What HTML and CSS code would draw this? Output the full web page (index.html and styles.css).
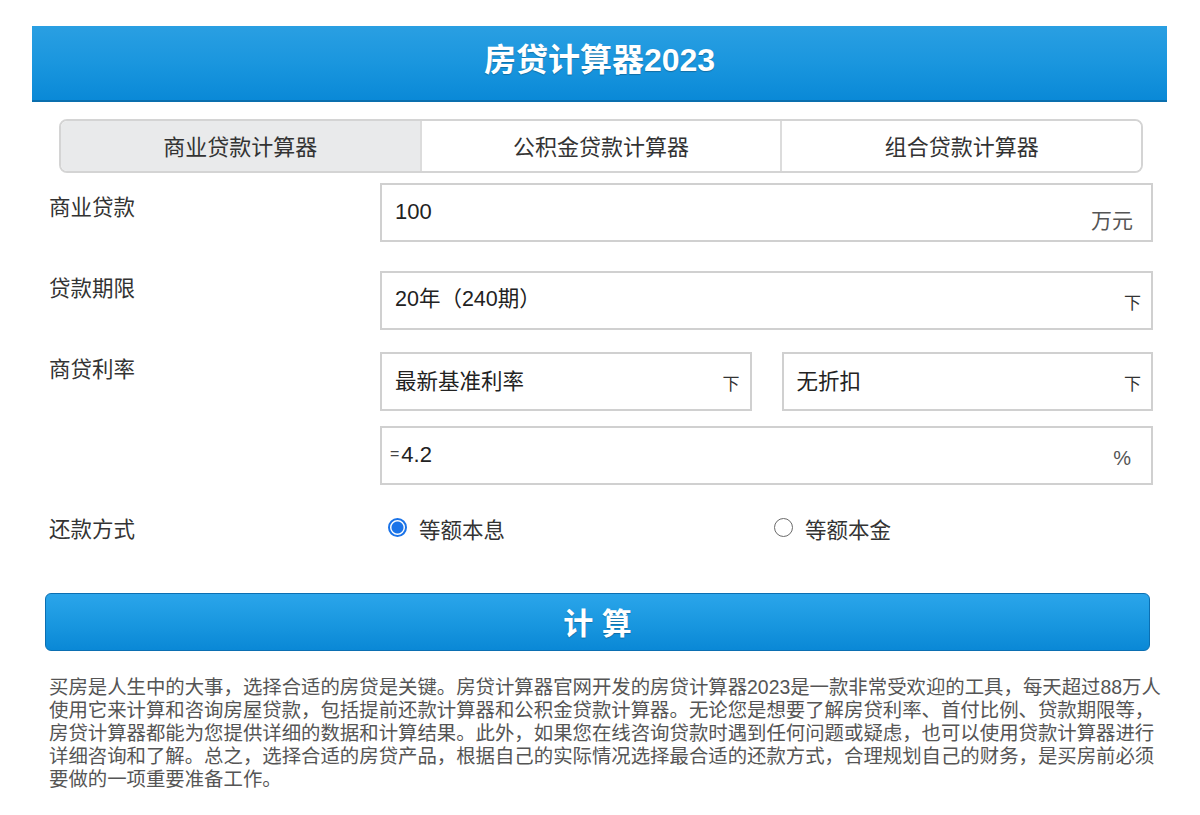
FILE: index.html
```html
<!DOCTYPE html>
<html lang="zh-CN">
<head>
<meta charset="utf-8">
<title>房贷计算器2023</title>
<link rel="stylesheet" href="styles.css">
</head>
<body>
<div class="page">
  <header class="topbar"><h1 class="title">房贷计算器2023</h1></header>

  <nav class="tabs">
    <a class="tab active">商业贷款计算器</a>
    <a class="tab">公积金贷款计算器</a>
    <a class="tab">组合贷款计算器</a>
  </nav>

  <form class="form">
    <div class="row row-amount">
      <label class="lbl">商业贷款</label>
      <div class="box">
        <span class="val">100</span>
        <span class="unit">万元</span>
      </div>
    </div>

    <div class="row row-term">
      <label class="lbl">贷款期限</label>
      <div class="box select">
        <span class="val">20年（240期）</span>
        <span class="arrow">下</span>
      </div>
    </div>

    <div class="row row-rate">
      <label class="lbl">商贷利率</label>
      <div class="rate-fields">
        <div class="pair">
          <div class="box select">
            <span class="val">最新基准利率</span>
            <span class="arrow">下</span>
          </div>
          <div class="box select">
            <span class="val">无折扣</span>
            <span class="arrow">下</span>
          </div>
        </div>
        <div class="box rate">
          <span class="val"><span class="eq">=</span>4.2</span>
          <span class="unit pct">%</span>
        </div>
      </div>
    </div>

    <div class="row row-method">
      <label class="lbl">还款方式</label>
      <div class="radios">
        <span class="radio-opt"><span class="radio checked"></span>等额本息</span>
        <span class="radio-opt"><span class="radio"></span>等额本金</span>
      </div>
    </div>
  </form>

  <button class="calc" type="button">计 算</button>

  <p class="intro">买房是人生中的大事，选择合适的房贷是关键。房贷计算器官网开发的房贷计算器2023是一款非常受欢迎的工具，每天超过88万人使用它来计算和咨询房屋贷款，包括提前还款计算器和公积金贷款计算器。无论您是想要了解房贷利率、首付比例、贷款期限等，房贷计算器都能为您提供详细的数据和计算结果。此外，如果您在线咨询贷款时遇到任何问题或疑虑，也可以使用贷款计算器进行详细咨询和了解。总之，选择合适的房贷产品，根据自己的实际情况选择最合适的还款方式，合理规划自己的财务，是买房前必须要做的一项重要准备工作。</p>
</div>
</body>
</html>
```

FILE: styles.css
```css
* { box-sizing: border-box; }

html, body {
  margin: 0;
  padding: 0;
  background: #ffffff;
}

body {
  font-family: "Liberation Sans", "Noto Sans CJK SC", sans-serif;
  color: #333;
}

.page {
  padding-top: 26px;
}

/* header */
.topbar {
  margin: 0 33px 0 32px;
  height: 76px;
  background: linear-gradient(to bottom, #2a9fe2 0%, #1a96de 50%, #0a89d7 100%);
  border-bottom: 2px solid #0a6fae;
  display: flex;
  align-items: center;
  justify-content: center;
}

.title {
  margin: 0 0 6px 0;
  font-size: 32px;
  font-weight: bold;
  color: #fff;
  line-height: 40px;
  text-shadow: 0 1px 1px rgba(0, 0, 0, 0.25);
}

/* tabs */
.tabs {
  margin: 17px 0 0 59px;
  width: 1084px;
  height: 54px;
  display: flex;
  border: 2px solid #d4d4d4;
  border-radius: 8px;
  overflow: hidden;
}

.tab {
  flex: 1;
  display: flex;
  align-items: center;
  justify-content: center;
  font-family: "Noto Sans CJK SC", sans-serif;
  font-size: 22px;
  color: #333;
  background: #fff;
  padding-bottom: 3px;
}

.tab + .tab {
  border-left: 2px solid #dcdcdc;
}

.tab.active {
  background: #e9eaeb;
}

/* form */
.form {
  margin: 10px 47px 0 49px;
}

.row {
  display: grid;
  grid-template-columns: 331px 1fr;
}

.lbl {
  font-family: "Noto Sans CJK SC", sans-serif;
  font-size: 21.5px;
  line-height: 30px;
  color: #333;
}

.row-amount { margin-bottom: 29px; }
.row-amount .lbl { padding-top: 8px; }

.row-term { margin-bottom: 22px; }
.row-term .lbl { padding-top: 1px; }

.row-rate .lbl { padding-top: 1px; }

.box {
  height: 59px;
  border: 2px solid #d0d0d0;
  background: #fff;
  display: flex;
  align-items: center;
  justify-content: space-between;
  padding: 0 18px 0 13px;
}

.val {
  font-size: 22px;
  color: #222;
  line-height: 30px;
  margin-top: -2px;
}

.unit {
  font-family: "Noto Sans CJK SC", sans-serif;
  font-size: 21px;
  color: #555;
  padding-top: 12px;
}

.select {
  padding-right: 10px;
}

.select .val {
  font-family: "Noto Sans CJK SC", "Liberation Sans", sans-serif;
  font-size: 21.5px;
  margin-top: -4px;
}

.row-term .select .val {
  font-family: "Liberation Sans", "Noto Sans CJK SC", sans-serif;
}

.arrow {
  font-family: "Noto Sans CJK SC", sans-serif;
  font-size: 17px;
  color: #333;
  padding-top: 2px;
}

.rate-fields {
  display: flex;
  flex-direction: column;
  gap: 15px;
}

.pair {
  display: grid;
  grid-template-columns: 1fr 1fr;
  gap: 30px;
}

.rate {
  height: 59px;
  padding-left: 8px;
  padding-right: 20px;
}

.eq {
  font-size: 16px;
  color: #444;
  vertical-align: 3px;
  margin-right: 2px;
}

.pct {
  font-family: "Liberation Sans", sans-serif;
  font-size: 20px;
  color: #555;
  padding-top: 6px;
}

/* radios */
.row-method {
  margin-top: 29px;
  align-items: center;
}

.row-method .lbl {
  padding-top: 0;
  margin-top: -3px;
}

.radios {
  display: grid;
  grid-template-columns: 386px 1fr;
  align-items: center;
}

.radio-opt {
  display: flex;
  align-items: center;
  font-family: "Noto Sans CJK SC", sans-serif;
  font-size: 21.5px;
  color: #333;
  line-height: 30px;
  padding-left: 8px;
}

.radio {
  width: 19px;
  height: 19px;
  border-radius: 50%;
  border: 1.5px solid #6b6b6b;
  background: #fff;
  margin-right: 12px;
  margin-top: -3px;
  flex: none;
}

.radio.checked {
  border: 2px solid #1a73e8;
  background: radial-gradient(circle, #1a73e8 0 5.5px, #fff 6.5px);
}

/* button */
.calc {
  display: block;
  margin: 49px 0 0 45px;
  width: 1105px;
  height: 58px;
  border: 1px solid #0b6fb2;
  border-radius: 6px;
  background: linear-gradient(to bottom, #2ba5ea 0%, #1a98e0 50%, #0a88d6 100%);
  color: #fff;
  font-family: "Liberation Sans", "Noto Sans CJK SC", sans-serif;
  font-size: 30px;
  font-weight: bold;
  text-shadow: 0 1px 1px rgba(0, 0, 0, 0.25);
  padding: 0 0 3px 0;
}

/* intro */
.intro {
  margin: 25px 30px 0 49px;
  font-family: "Liberation Sans", "Noto Sans CJK SC", sans-serif;
  font-size: 19.4px;
  line-height: 23px;
  color: #555;
}
```
